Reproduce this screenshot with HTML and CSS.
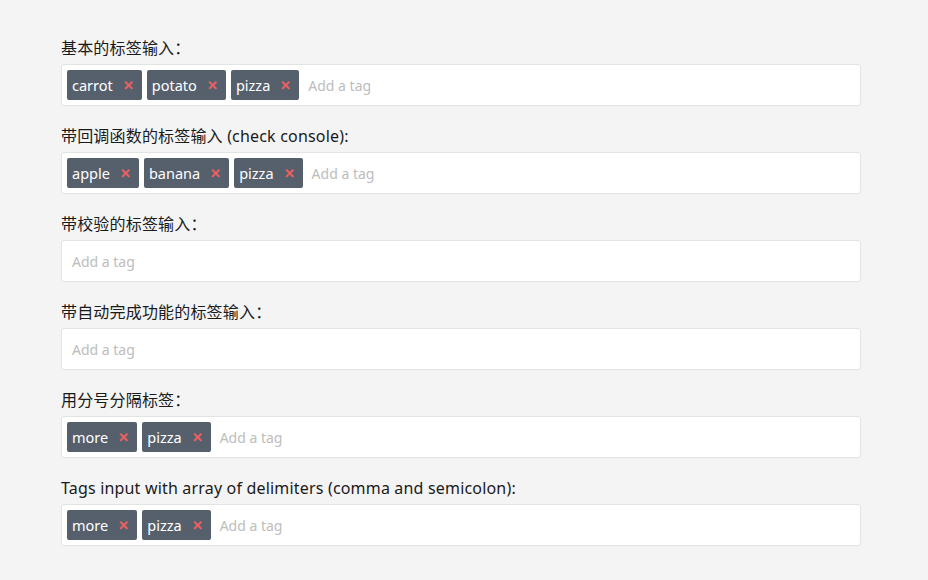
FILE: index.html
```html
<!DOCTYPE html>
<html lang="zh">
<head>
<meta charset="utf-8">
<link rel="stylesheet" href="styles.css">
</head>
<body>
<div class="page">
  <div class="field">
    <div class="label">基本的标签输入：</div>
    <div class="tags-input">
      <span class="tag">carrot<span class="x">✕</span></span>
      <span class="tag">potato<span class="x">✕</span></span>
      <span class="tag">pizza<span class="x">✕</span></span>
      <span class="placeholder">Add a tag</span>
    </div>
  </div>
  <div class="field">
    <div class="label">带回调函数的标签输入 (check console):</div>
    <div class="tags-input">
      <span class="tag">apple<span class="x">✕</span></span>
      <span class="tag">banana<span class="x">✕</span></span>
      <span class="tag">pizza<span class="x">✕</span></span>
      <span class="placeholder">Add a tag</span>
    </div>
  </div>
  <div class="field">
    <div class="label">带校验的标签输入：</div>
    <div class="tags-input">
      <span class="placeholder">Add a tag</span>
    </div>
  </div>
  <div class="field">
    <div class="label">带自动完成功能的标签输入：</div>
    <div class="tags-input">
      <span class="placeholder">Add a tag</span>
    </div>
  </div>
  <div class="field">
    <div class="label">用分号分隔标签：</div>
    <div class="tags-input">
      <span class="tag">more<span class="x">✕</span></span>
      <span class="tag">pizza<span class="x">✕</span></span>
      <span class="placeholder">Add a tag</span>
    </div>
  </div>
  <div class="field">
    <div class="label">Tags input with array of delimiters (comma and semicolon):</div>
    <div class="tags-input">
      <span class="tag">more<span class="x">✕</span></span>
      <span class="tag">pizza<span class="x">✕</span></span>
      <span class="placeholder">Add a tag</span>
    </div>
  </div>
</div>
</body>
</html>
```
FILE: styles.css
```css
html, body {
  margin: 0;
  padding: 0;
  background: #f4f4f4;
}
body {
  font-family: "Noto Sans", "Noto Sans CJK SC", sans-serif;
  color: #1a1a1a;
}
.page {
  padding: 36px 0 0 61px;
  width: 800px;
  display: flex;
  flex-direction: column;
  gap: 18px;
}
.field {
  display: flex;
  flex-direction: column;
  gap: 4px;
}
.label {
  font-size: 16px;
  letter-spacing: 0.18px;
  line-height: 24px;
  height: 24px;
}
.tags-input {
  box-sizing: border-box;
  height: 42px;
  background: #fff;
  border: 1px solid #e3e3e3;
  border-radius: 3px;
  padding: 5px;
  display: flex;
  align-items: center;
  gap: 5px;
}
.tag {
  display: inline-flex;
  align-items: center;
  height: 30px;
  box-sizing: border-box;
  padding: 0 8px 0 5px;
  background: #56606d;
  color: #fff;
  border-radius: 2px;
  font-size: 14.5px;
}
.x {
  color: #ef6161;
  font-size: 13px;
  font-weight: bold;
  margin-left: 10px;
}
.placeholder {
  color: #bdbdbd;
  font-size: 14px;
  margin-left: 4px;
}
.tags-input > .placeholder:first-child {
  margin-left: 5px;
}
```
